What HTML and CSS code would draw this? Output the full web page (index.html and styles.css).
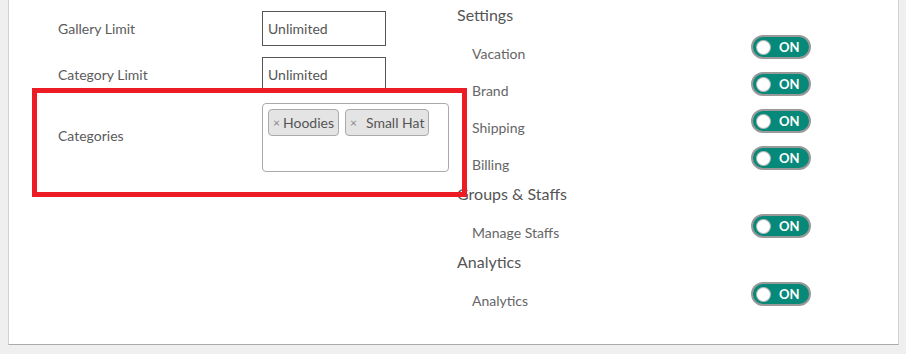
FILE: index.html
```html
<!DOCTYPE html>
<html lang="en">
<head>
  <meta charset="UTF-8">
  <title>Plan permissions</title>
  <link rel="stylesheet" href="styles.css">
</head>
<body>
  <div class="card">
    <!-- limits -->
    <div class="col-left">
      <div class="field">
        <label class="field-label">Gallery Limit</label>
        <div class="input">Unlimited</div>
      </div>
      <div class="field">
        <label class="field-label">Category Limit</label>
        <div class="input">Unlimited</div>
      </div>
      <div class="field">
        <label class="field-label field-label-up">Categories</label>
        <div class="tag-box">
          <span class="tag"><span class="tag-x">×</span>Hoodies</span>
          <span class="tag tag-wide"><span class="tag-x">×</span>Small Hat</span>
        </div>
      </div>
    </div>

    <!-- permissions -->
    <div class="col-right">
      <h3 class="group-title">Settings</h3>
      <div class="perm-row"><span class="perm-label">Vacation</span><span class="toggle"><span class="knob"></span>ON</span></div>
      <div class="perm-row"><span class="perm-label">Brand</span><span class="toggle"><span class="knob"></span>ON</span></div>
      <div class="perm-row"><span class="perm-label">Shipping</span><span class="toggle"><span class="knob"></span>ON</span></div>
      <div class="perm-row"><span class="perm-label">Billing</span><span class="toggle"><span class="knob"></span>ON</span></div>

      <h3 class="group-title">Groups &amp; Staffs</h3>
      <div class="perm-row"><span class="perm-label">Manage Staffs</span><span class="toggle"><span class="knob"></span>ON</span></div>

      <h3 class="group-title">Analytics</h3>
      <div class="perm-row"><span class="perm-label">Analytics</span><span class="toggle"><span class="knob"></span>ON</span></div>
    </div>

    <!-- 注釈の赤枠 -->
    <div class="highlight"></div>
  </div>
</body>
</html>
```

FILE: styles.css
```css
/* base */
body { margin: 0 7px 0 8px; background: #efefef; font-family: "Lato", "Open Sans", sans-serif; color: #5b5b5b; font-size: 14px; }
.card { position: relative; display: flex; background: #fff; border: 1px solid #d2d2d2; border-top: none; border-bottom-color: #aaa; box-shadow: 1px 1px 1px rgba(0,0,0,0.45); padding: 4px 0 25px 49px; }

/* left column */
.col-left { width: 399px; padding-top: 7px; }
.field { display: flex; align-items: center; margin-bottom: 11px; }
.field-label { width: 204px; }
.field-label-up { margin-top: -5px; }
.input { width: 117px; height: 33px; line-height: 33px; padding-left: 5px; border: 1px solid #555; color: #555; }
.tag-box { width: 180px; height: 62px; padding: 5px 0 0 5px; border: 1px solid #aaa; border-radius: 4px; display: flex; align-items: flex-start; gap: 6px; }
.tag { display: inline-flex; align-items: center; height: 25px; padding: 0 4px; background: #e4e4e4; border: 1px solid #aaa; border-radius: 4px; color: #555; }
.tag-x { font-size: 12px; color: #888; margin-right: 3px; }
.tag-wide .tag-x { margin-right: 9px; }

/* right column */
.col-right { width: 354px; }
.group-title { margin: 0 0 9px; font-size: 16px; line-height: 22px; font-weight: normal; color: #555; }
.perm-row { display: flex; height: 37px; padding-left: 15px; }
.perm-label { width: 279px; padding-top: 9px; line-height: 20px; color: #666; }
.toggle { display: flex; align-items: center; width: 56px; height: 20px; border: 2px solid #999; border-radius: 12px; background: #07897a; color: #fff; font-size: 13px; font-weight: bold; }
.knob { width: 13px; height: 13px; margin: 0 9px 0 4px; border-radius: 50%; background: #fff; box-shadow: 0 0 0 1px #bbb; }

/* red annotation box */
.highlight { position: absolute; left: 23px; top: 88px; width: 425px; height: 99px; border: 5px solid #ed1c24; }
```
